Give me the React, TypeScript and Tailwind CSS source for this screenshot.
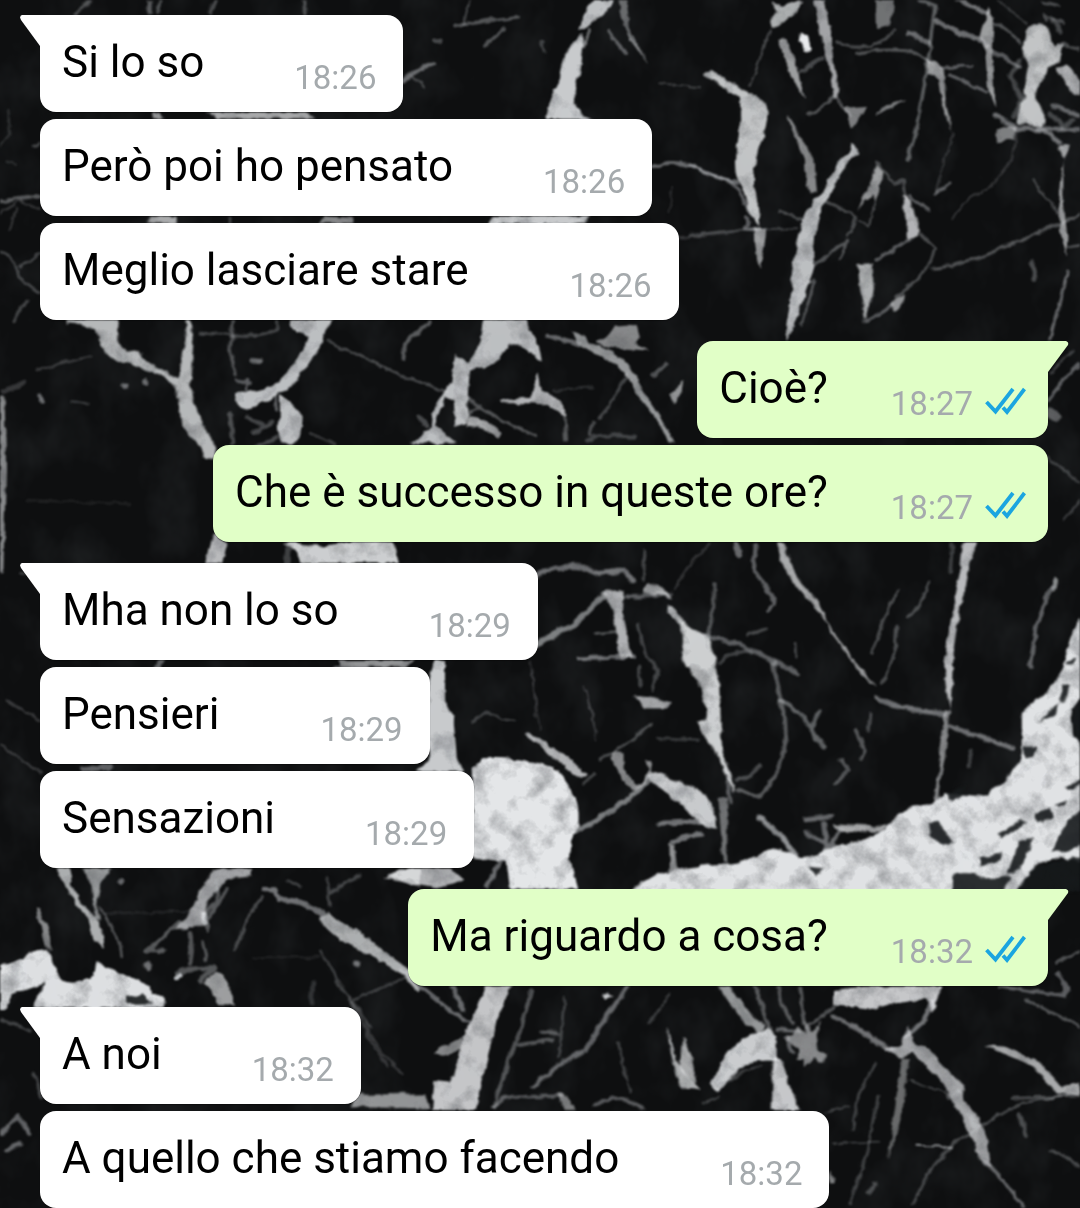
import React from "react";

type Message = { text: string; time: string; wide?: boolean };
type Group = { mine: boolean; messages: Message[] };

const conversation: Group[] = [
  {
    mine: false,
    messages: [
      { text: "Si lo so", time: "18:26" },
      { text: "Però poi ho pensato", time: "18:26" },
      { text: "Meglio lasciare stare", time: "18:26", wide: true },
    ],
  },
  {
    mine: true,
    messages: [
      { text: "Cioè?", time: "18:27" },
      { text: "Che è successo in queste ore?", time: "18:27" },
    ],
  },
  {
    mine: false,
    messages: [
      { text: "Mha non lo so", time: "18:29" },
      { text: "Pensieri", time: "18:29", wide: true },
      { text: "Sensazioni", time: "18:29" },
    ],
  },
  { mine: true, messages: [{ text: "Ma riguardo a cosa?", time: "18:32" }] },
  {
    mine: false,
    messages: [
      { text: "A noi", time: "18:32" },
      { text: "A quello che stiamo facendo", time: "18:32", wide: true },
    ],
  },
];

// A slab is one area of the marble with its own drawing scale.
// solids: [path, opacity]; lines: [path, width, opacity]
type Slab = {
  transform: string;
  solids: [string, number][];
  lines: [string, number, number][];
  holes?: string[];
};

const slabs: Slab[] = [
  {
    transform: "translate(400 0) scale(0.33333)",
    solids: [
      ["M580 0L640 0Q620 45 590 60Q560 80 535 90Q545 40 580 0Z", 0.8],
      ["M505 140L550 95Q552 150 540 220Q520 260 525 300Q530 335 580 358L436 358Q450 300 480 230Q495 160 505 140Z", 0.85],
      ["M545 140L568 85L575 85L552 150Z", 0.5],
      ["M280 645L575 645L555 672L265 672Z", 0.85],
      ["M655 0L680 0L690 90L735 180L690 120L665 50Z", 0.4],
    ],
    lines: [
      ["M165 80Q260 60 355 50", 11, 0.35],
      ["M190 75L210 -5", 6, 0.3],
      ["M255 135Q285 110 312 88", 12, 0.35],
      ["M10 245Q50 205 100 190", 12, 0.45],
      ["M35 230L75 262", 6, 0.3],
      ["M625 95Q660 140 675 160", 12, 0.4],
      ["M690 110L745 185", 8, 0.3],
      ["M420 125L438 150", 10, 0.25],
      ["M105 120L125 122", 12, 0.3],
      ["M745 508Q800 475 880 500Q960 540 1010 545", 12, 0.45],
      ["M780 250L900 262", 6, 0.25],
      ["M840 712L1000 695", 8, 0.22],
      ["M820 560L805 640", 4, 0.2],
    ],
  },
  {
    transform: "translate(690 0) scale(0.33333)",
    solids: [
      ["M45 225Q55 200 80 220L175 280Q235 300 235 330Q230 380 215 420Q190 480 192 560Q205 600 208 680L180 640Q165 580 140 530Q130 490 140 440Q155 370 150 295Q80 250 45 225Z", 0.82],
      ["M190 680L228 690Q225 750 208 800Q195 760 195 700Z", 0.65],
      ["M245 0L275 20L330 0L340 12Q310 50 265 75Q235 90 240 65L262 35Z", 0.72],
      ["M262 120Q290 110 305 150L325 220L345 300Q315 260 300 220Z", 0.65],
      ["M372 0L405 0Q415 70 425 120Q425 170 445 260Q445 300 430 290Q430 240 412 180L390 100Z", 0.68],
      ["M555 0L615 0L600 75L558 88Z", 0.45],
      ["M330 98L354 104L362 150L343 156L328 122Z", 1],
      ["M330 98L354 104L362 150L343 156L328 122Z", 1],
      ["M290 345Q310 360 335 420Q375 470 372 510L378 580L362 580Q345 530 345 480Z", 0.55],
      ["M460 322L535 318Q510 350 490 385Z", 0.5],
      ["M560 345Q570 315 650 300Q600 325 560 345Z", 0.5],
      ["M488 430L505 462Q460 495 440 540Q430 585 405 605Q385 640 380 680Q368 740 375 800Q350 860 330 920Q315 980 290 1020L288 980Q305 900 305 830Q320 720 340 660Q360 620 375 595Q410 575 420 530Q445 475 475 462Z", 0.8],
      ["M560 495L578 515Q570 570 555 605L548 580Q525 600 500 635Q545 550 560 495Z", 0.65],
      ["M640 585L662 600Q665 640 690 690Q670 720 650 710L650 660Q635 630 640 585Z", 0.75],
      ["M502 792L550 790Q545 820 552 860Q545 910 525 960Q520 920 512 880Z", 0.72],
      ["M595 915L645 878Q635 920 610 940Z", 0.6],
      ["M895 20L912 60L905 150L915 320L895 270L885 150L870 120Z", 0.65],
      ["M1010 90Q1050 50 1080 90L1090 140L1120 130L1110 180Q1070 200 1060 240Q1030 270 1040 310Q1080 350 1060 380L980 370Q985 320 1005 290Q1000 230 1015 190Q985 170 1010 90Z", 0.82],
      ["M1100 205Q1130 180 1150 210L1172 250L1172 285Q1130 270 1115 230Z", 0.75],
      ["M1110 440L1140 430Q1130 470 1120 475Q1100 460 1110 440Z", 0.7],
      ["M1120 475L1108 600L1110 690L1130 770L1132 710L1120 600Z", 0.65],
      ["M715 180L745 190L765 225L765 290L785 400L755 310L745 240L715 215Z", 0.65],
      ["M920 390L980 375L970 420L925 430Z", 0.5],
    ],
    lines: [
      ["M0 500Q70 530 120 540Q160 590 180 640", 9, 0.4],
      ["M165 650Q190 670 160 685L210 690", 10, 0.4],
      ["M240 90L180 260", 6, 0.3],
      ["M330 215L400 175", 12, 0.3],
      ["M440 125Q490 155 560 130Q600 110 615 90", 9, 0.3],
      ["M500 160Q570 145 650 152Q700 170 730 190", 9, 0.35],
      ["M655 98Q690 110 715 130", 14, 0.45],
      ["M690 0L735 20L725 90L710 220L685 350L655 480", 10, 0.42],
      ["M740 65L800 95Q860 110 890 135", 15, 0.5],
      ["M800 -5L890 40", 14, 0.5],
      ["M915 70Q960 90 990 130", 8, 0.35],
      ["M900 150L950 175L990 200", 12, 0.4],
      ["M750 205L850 195", 8, 0.4],
      ["M780 225L890 275", 10, 0.4],
      ["M920 0L1010 70", 6, 0.25],
      ["M440 290Q460 320 480 350M430 290Q400 325 350 345", 9, 0.35],
      ["M405 600L495 650Q490 690 470 710", 8, 0.3],
      ["M270 635L340 660", 9, 0.3],
      ["M0 705L130 690L320 685", 6, 0.25],
      ["M560 490L610 550L640 540L650 600", 9, 0.3],
      ["M555 600L540 680L505 660", 6, 0.3],
      ["M660 590L718 630", 10, 0.4],
      ["M690 700L735 745L715 800L670 850L620 890", 8, 0.35],
      ["M560 780L660 715M525 965L600 920", 10, 0.4],
      ["M730 805Q850 790 930 745Q1020 710 1100 675L1170 645", 9, 0.38],
      ["M735 585L780 550", 10, 0.4],
      ["M1030 540L1105 640", 6, 0.35],
      ["M1135 810Q1110 900 1080 1015", 9, 0.5],
      ["M1130 745L1170 735", 6, 0.4],
      ["M375 800Q410 760 470 725L450 780M350 850L375 840L335 970", 9, 0.35],
      ["M915 345L980 385L1060 390L1110 430", 14, 0.5],
      ["M1045 385L1170 388M1090 320L1170 345", 13, 0.45],
      ["M1060 10L1110 20M1120 130L1165 150M1070 60L1060 40L1120 70", 10, 0.3],
      ["M980 390L965 480L900 560L820 610L790 660", 6, 0.22],
      ["M1025 790L1035 835", 15, 0.3],
      ["M790 400L760 490L740 580", 5, 0.25],
      ["M990 180L960 230L1000 300L970 350M1110 100L1090 60M1080 340L1120 380L1150 360", 14, 0.28],
    ],
  },
  {
    transform: "translate(0 300) scale(0.33333)",
    solids: [
      ["M200 55L355 55L355 110Q350 150 390 155L415 150Q440 195 480 205L535 235Q545 180 558 110L560 50L570 50L580 130L570 250Q575 300 600 350Q625 410 650 440L640 480Q605 480 600 440L545 380Q540 320 528 260Q480 215 435 210Q395 185 350 185Q295 150 300 110Q270 70 200 70Z", 0.77],
      ["M870 60L1000 55L970 100Q970 140 935 175Q920 210 860 270Q800 305 745 330Q705 320 705 280Q780 275 820 255Q880 210 905 150L930 110Q870 90 870 60Z", 0.8],
      ["M840 285Q870 300 910 350Q915 390 880 435L845 430Q825 380 840 340Z", 0.8],
      ["M640 700L685 725L665 790L618 790Z", 0.78],
      ["M880 725Q960 750 1070 720L1180 725L1200 790L900 790Q900 750 850 730Z", 0.87],
      ["M0 290L14 290L18 500L10 820L0 820Z", 0.55],
    ],
    lines: [
      ["M45 65Q50 30 85 0", 10, 0.3],
      ["M600 100L690 103Q770 115 830 90L830 60", 8, 0.3],
      ["M700 60L690 150L705 220", 10, 0.35],
      ["M980 120L1200 225L1340 275", 8, 0.3],
      ["M110 210L270 170", 7, 0.27],
      ["M10 275L70 250", 16, 0.2],
      ["M80 600L390 612", 7, 0.1],
      ["M215 305L265 312", 8, 0.25],
      ["M690 340L700 430M760 400L820 365M770 440L830 410M740 350L800 380", 12, 0.3],
      ["M825 290L830 330M710 240L750 250M740 240L740 270", 10, 0.4],
      ["M755 182L778 184M372 255L380 258M437 244L440 248M120 285L124 300", 15, 0.5],
      ["M865 730L860 790", 16, 0.25],
      ["M930 400L1010 435", 8, 0.22],
    ],
  },
  {
    transform: "translate(380 300) scale(0.33333)",
    solids: [
      ["M310 55L440 55L445 90Q480 120 485 185Q465 170 445 150Q410 125 385 135Q350 190 320 200Q290 195 270 215L265 260L260 370L225 380L222 300L195 290L180 330L165 375L230 430L90 430Q140 400 155 375L165 320L215 240L225 165L265 190Q300 150 300 120Z", 0.8],
      ["M455 290L475 215L485 275Q550 290 560 350L545 345Q510 310 460 310L360 310L360 303Z", 0.75],
      ["M260 350Q310 345 365 400L350 415Q320 385 265 380Z", 0.7],
      ["M650 120Q700 100 700 80L770 75L780 110L770 130L805 155L700 145Q660 140 650 120Z", 0.55],
      ["M575 95L615 105L625 130Q680 140 730 180Q770 220 795 285Q840 350 860 385L885 432L865 430L845 380Q790 310 770 280Q740 220 700 190Q620 150 590 130Z", 0.62],
      ["M870 285L910 245L905 275L885 310Z", 0.6],
    ],
    lines: [
      ["M500 108Q550 120 600 135", 13, 0.45],
      ["M70 180L75 130L150 65", 12, 0.38],
      ["M820 230L860 190", 12, 0.35],
      ["M660 355Q700 310 710 270Q740 235 740 220", 9, 0.28],
      ["M620 420Q640 400 760 410", 12, 0.25],
      ["M265 300L300 320L260 340M300 320L370 365L470 410", 9, 0.35],
      ["M555 350L560 420", 9, 0.35],
      ["M520 270L640 262", 6, 0.18],
      ["M115 350L140 375M640 370L630 400", 12, 0.3],
    ],
  },
  {
    transform: "translate(520 530) scale(0.35714 0.33333)",
    solids: [
      ["M232 190Q260 170 290 185L288 250Q300 300 302 350L318 385L280 378Q275 290 255 230Z", 0.74],
      ["M345 175L360 160L390 168L430 205L400 200L345 190Z", 0.65],
      ["M415 220Q440 240 460 280Q500 300 520 320Q545 350 550 400Q560 470 562 560Q560 630 575 700Q605 770 600 790Q570 710 550 670Q520 630 497 575Q525 570 520 540Q515 480 490 440Q455 400 453 360Q465 310 440 275L412 250Z", 0.87],
      ["M315 495Q370 495 425 520L415 535L350 535Z", 0.68],
      ["M10 610Q50 610 90 650Q150 690 185 735L160 740Q100 690 60 650Z", 0.74],
      ["M365 725Q430 745 480 770Q530 790 535 830Q550 870 548 900Q520 885 490 870Q460 830 420 800Q380 770 360 745Z", 0.85],
      ["M255 665L290 670L290 720L325 765Q350 760 360 720L350 690L365 690L365 740Q330 780 315 780Q270 740 255 665Z", 0.55],
      ["M720 35L740 35Q750 100 790 160Q840 210 860 280Q900 340 950 410L1000 470L960 440Q900 350 870 310Q840 240 790 190Q730 120 720 35Z", 0.7],
      ["M1240 35L1280 35Q1260 90 1250 160Q1225 260 1215 350Q1210 450 1205 540Q1190 480 1188 400Q1200 310 1215 220Q1235 120 1240 35Z", 0.78],
      ["M1190 540L1205 540L1190 680L1175 760L1168 830L1158 830L1175 680Z", 0.55],
      ["M310 1085Q360 1030 440 1020Q520 1000 600 1000Q660 985 700 955Q740 955 790 985Q830 980 870 950Q950 940 1020 900Q1050 850 1100 830Q1170 825 1190 790L1310 800Q1330 770 1360 750Q1395 710 1405 670L1405 550Q1440 510 1480 480Q1520 430 1530 370Q1545 300 1575 250L1575 500L1540 540L1545 610L1575 650L1575 1000L1510 980L1450 1000L1390 1085Z", 0.96],
      ["M875 880L1030 890L1010 905L900 905Z", 0.7],
      ["M555 800L580 800L580 995L568 995Z", 0.45],
      ["M418 940L432 945L440 1020L420 1030Z", 0.6],
    ],
    lines: [
      ["M45 135Q110 100 180 112L220 130L290 122Q310 135 315 155", 15, 0.5],
      ["M45 345Q90 310 150 285Q190 250 235 195", 17, 0.55],
      ["M160 385L320 378", 11, 0.5],
      ["M300 200L420 195", 13, 0.4],
      ["M210 310L270 305", 8, 0.35],
      ["M430 180L480 100L530 40", 7, 0.2],
      ["M545 160L540 250L525 320", 12, 0.35],
      ["M520 320Q600 335 650 360L710 395L780 430", 14, 0.4],
      ["M560 400Q590 360 650 365", 10, 0.28],
      ["M710 400Q725 500 740 560Q750 640 725 710Q700 770 670 800L610 780", 13, 0.38],
      ["M730 510Q780 540 810 590L850 650M815 590L840 545", 12, 0.42],
      ["M660 45L655 120L715 215L695 245", 12, 0.4],
      ["M605 35L612 75", 14, 0.45],
      ["M610 750Q650 740 670 705", 12, 0.3],
      ["M150 905Q230 870 320 790L370 740", 15, 0.55],
      ["M225 690L300 640L370 580", 9, 0.35],
      ["M390 880L500 875M430 935Q470 915 510 912", 15, 0.5],
      ["M670 865Q710 895 740 930L770 975", 16, 0.65],
      ["M1000 505Q1080 540 1190 552", 15, 0.5],
      ["M1205 590L1300 625L1380 655", 14, 0.5],
      ["M1498 150L1495 170", 18, 0.6],
      ["M1490 175Q1450 240 1440 330L1430 410", 13, 0.4],
      ["M1210 40L1205 130M1265 660L1255 710", 10, 0.25],
      ["M1145 155L1120 225L1085 265M1060 180L1030 240L985 365M1055 290L1050 370L1015 460", 9, 0.3],
      ["M350 60L345 150M330 280L350 370L385 420L370 480M335 410L335 470", 9, 0.28],
      ["M575 700L590 820", 11, 0.4],
      ["M900 690L920 720L885 760M940 600L965 660L955 690", 11, 0.35],
      ["M770 340L772 385M980 550L975 600", 8, 0.3],
      ["M800 870L870 860M800 910L880 950M850 880L860 960M900 900L870 950", 14, 0.45],
      ["M180 760L210 730M640 315L690 295", 10, 0.3],
      ["M35 420L45 560M180 470L215 610", 6, 0.15],
      ["M385 625L500 632", 7, 0.25],
    ],
    holes: [
      "M1145 880L1170 875L1215 940L1190 945L1150 920Z",
      "M1400 930L1435 920L1430 960L1395 1020L1365 1035L1380 980Z",
      "M1285 985L1350 970L1345 990L1290 1010Z",
      "M1440 850L1480 835L1490 865L1450 880Z",
      "M1495 830L1530 810L1520 830Z",
      "M1535 870L1575 840L1575 940L1535 965L1490 960Z",
      "M1210 1035Q1260 1020 1300 1045L1375 1040L1350 1085L1210 1085Z",
      "M805 1010L850 1015L830 1040Z",
      "M1440 1010L1575 980L1575 1085L1390 1085Z",
      "M1475 550L1510 515L1500 555L1450 575Z",
      "M1515 460L1540 465L1535 500L1515 520Z",
      "M1525 400L1555 385L1550 405Z",
      "M1340 910L1400 870L1420 875L1350 925Z",
      "M1190 790L1250 770L1230 800L1205 815Z",
      "M1410 650L1445 650L1440 680L1415 685Z",
      "M1525 770L1575 750L1575 765L1535 780Z",
      "M1545 540L1575 510L1575 650L1550 610Z",
    ],
  },
  {
    transform: "translate(340 640) scale(0.33333)",
    solids: [
      ["M285 55L315 60L315 180L340 230L350 350L370 395L230 395L268 360L255 170Z", 0.85],
      ["M0 60L220 60L200 80L0 80Z", 0.6],
      ["M400 390L430 355Q560 350 640 385Q690 430 695 460Q720 480 715 560Q690 600 690 660L715 748L510 748L500 665L390 650Z", 0.98],
      ["M140 705L200 685L330 685L370 720L290 745L200 730Z", 0.74],
    ],
    lines: [
      ["M485 660L440 740", 13, 0.45],
      ["M400 245L440 215L490 235L525 240", 7, 0.25],
      ["M570 60L600 270M740 150L770 300", 5, 0.15],
    ],
  },
  {
    transform: "translate(0 850) scale(0.33333)",
    solids: [
      ["M165 50L210 50L215 100Q230 150 270 185L300 220L315 290L280 270L265 205Q220 160 200 110Z", 0.72],
      ["M245 55L335 55L300 110L290 170L300 210L285 205L278 110Z", 0.62],
      ["M0 345Q60 340 90 305L145 300L180 390Q220 410 280 380L290 335L360 370Q430 390 460 430L495 445L490 475L100 475L135 400L35 435L15 480L0 480Z", 0.95],
      ["M645 55L755 55L755 80L690 85L640 130Q610 170 610 220Q560 240 522 240Q590 170 600 120Z", 0.68],
      ["M610 395L650 365Q680 370 690 420L705 468L660 465Q640 420 610 395Z", 0.65],
      ["M955 200L985 185Q1010 220 1080 245Q1130 290 1220 350L1260 420L1250 425L1210 375Q1130 325 1060 290Q980 250 955 200Z", 0.72],
      ["M110 175L120 180L150 260L152 300L135 290Z", 0.55],
      ["M1150 85L1220 55L1260 55L1260 110L1200 95Z", 0.65],
    ],
    lines: [
      ["M790 118L825 120Q830 160 880 152Q920 160 965 190", 16, 0.5],
      ["M790 140L745 200Q740 240 700 300", 9, 0.3],
      ["M440 305L540 215M450 300L490 300", 14, 0.38],
      ["M300 170L360 280L365 320", 8, 0.35],
      ["M960 300L1030 420L1110 530M1060 450L1220 380", 7, 0.28],
      ["M570 250L575 300L570 340M530 370Q560 350 610 360L640 350M600 390L645 355", 14, 0.35],
      ["M650 90L650 150L615 190L620 240M680 120L620 210M610 280L620 330", 12, 0.35],
      ["M610 190L615 215M528 385L540 372", 12, 0.9],
      ["M1068 340L1075 342M360 93L364 95M440 345L442 350", 18, 0.5],
      ["M985 130L1080 75M980 80L985 170M860 90L900 110", 8, 0.3],
      ["M940 400L935 460", 18, 0.18],
      ["M320 190L600 182M760 325L960 320", 5, 0.15],
    ],
    holes: ["M380 440L430 432L460 460L385 462Z"],
  },
  {
    transform: "translate(340 970) scale(0.47192 0.33333)",
    solids: [
      ["M310 45L362 45Q350 100 330 150Q320 220 310 280Q298 350 290 420L195 420L200 330L235 335Q255 270 255 230Q270 170 285 130Z", 0.83],
      ["M30 375L180 370L190 415L20 412Z", 0.6],
      ["M200 250L210 230L260 205L255 235L215 260Z", 0.55],
      ["M800 48L825 48L870 130L900 165L890 190L850 150Z", 0.62],
      ["M905 175L925 200L925 270Q870 260 840 310L800 365L785 345Q800 280 840 220Q870 195 905 175Z", 0.86],
      ["M918 260L935 265L955 360L975 420L915 420Z", 0.84],
      ["M690 170L700 200L715 280Q745 330 765 360L722 355Q705 280 700 240Z", 0.72],
      ["M725 200L745 260L755 340L720 300Z", 0.7],
      ["M1045 60L1110 50L1275 48L1255 130L1245 85L1180 100L1130 120L1045 105Z", 0.84],
      ["M970 165L990 190L985 150L1000 190L1020 150L1008 200L1012 245L1030 250L1025 280L1005 262L985 295L985 265L965 270L975 240L940 200L960 195Z", 0.55],
      ["M1155 232L1190 230L1205 165L1215 220L1250 240L1290 310L1325 345L1320 390L1345 430L1370 500L1380 590L1355 570L1345 520L1300 400L1280 340L1210 240L1190 270Z", 0.68],
      ["M1365 225L1410 230L1485 280L1530 350L1568 335L1568 380L1520 370L1470 290Z", 0.7],
      ["M460 370L475 370L500 420L475 420Z", 0.5],
      ["M1190 270L1208 270L1190 440L1160 570L1175 420Z", 0.42],
      ["M555 75L565 65L578 75L562 90Z", 0.85],
      ["M1038 600L1050 640L1038 640Z", 0.6],
    ],
    lines: [
      ["M610 50L560 150L520 240Q450 290 410 350", 11, 0.45],
      ["M130 0L170 50L240 130L270 155M240 50L260 120", 11, 0.45],
      ["M405 60L385 170L360 260L325 410", 9, 0.35],
      ["M380 225L450 210M430 185L460 190", 12, 0.38],
      ["M325 410Q350 370 400 380L470 378M540 410Q560 380 600 385L640 415", 10, 0.4],
      ["M50 160L90 250L130 310M20 80L60 200L100 290", 6, 0.2],
      ["M590 220L600 290L615 370M700 70L655 165M475 80L465 260", 6, 0.25],
      ["M880 50L910 180M930 50L935 100L960 160M975 50L985 160M1050 110L990 170", 8, 0.38],
      ["M925 180L975 185M945 200L960 250", 9, 0.45],
      ["M1045 140Q1100 170 1130 210L1170 240", 12, 0.5],
      ["M1255 90L1240 150L1200 200", 10, 0.5],
      ["M1370 580L1410 640L1450 714", 9, 0.45],
      ["M1210 330L1290 375M1135 280L1100 370L1085 480M1140 380L1120 540L1080 700", 6, 0.28],
      ["M1215 700L1250 600L1300 520L1440 400L1568 370", 7, 0.3],
      ["M1220 527L1295 530", 6, 0.65],
      ["M1425 385L1568 378M1440 430L1455 500M1510 540L1568 590", 9, 0.3],
      ["M1045 520L1140 515M1030 425L1080 410", 5, 0.25],
      ["M1400 50L1535 80L1540 50L1520 10", 11, 0.4],
      ["M1315 360L1290 380M1330 430L1350 470M1135 640L1120 670", 12, 0.3],
      ["M800 360Q850 300 890 290M770 400L800 380", 6, 0.25],
    ],
  },
  {
    transform: "translate(0 0) scale(0.33333)",
    solids: [
      ["M440 0L455 0L455 42L440 42Z", 0.35],
      ["M455 335L480 335L495 355L460 355Z", 0.6],
      ["M620 335L920 335L945 355L650 355Z", 0.7],
      ["M455 646L530 646L530 670L440 670Z", 0.7],
      ["M975 646L1060 650L1060 670L955 670Z", 0.55],
    ],
    lines: [
      ["M225 45L275 -5M470 40L485 -5M630 40L650 -5M910 -5L915 40", 9, 0.35],
      ["M0 602L120 588", 9, 0.38],
      ["M0 640L60 600L120 630M30 690L50 620", 6, 0.22],
      ["M25 330L30 400L0 440M20 485L50 495", 7, 0.16],
      ["M0 755Q50 770 55 830L120 880M60 800L120 760", 8, 0.28],
      ["M100 440L120 430M685 650L690 670", 9, 0.3],
      ["M0 2235L120 2320M20 2100L120 2160M60 1720L120 1710", 7, 0.22],
      ["M0 3400L55 3350L85 3400M20 3450L60 3430", 14, 0.45],
      ["M100 3220L125 3290M0 3060L90 3090", 9, 0.3],
      ["M3145 1200L3200 1130L3240 1090", 12, 0.4],
      ["M3150 1240L3170 1250", 30, 0.38],
      ["M3150 1120L3220 1050M3145 1370L3240 1450M3190 1560L3240 1500", 8, 0.25],
      ["M3080 3000L3240 3080M3170 2890L3240 2850", 9, 0.35],
      ["M460 2020L490 1970M1000 2010L1100 2005M250 2310L330 2300", 16, 0.4],
    ],
  },
];

function Marble() {
  return (
    <svg
      aria-hidden="true"
      className="absolute inset-0 h-full w-full"
      viewBox="0 0 1080 1208"
      preserveAspectRatio="xMidYMin slice"
    >
      <defs>
        <filter id="veins" x="0" y="0" width="1080" height="1208" filterUnits="userSpaceOnUse" colorInterpolationFilters="sRGB">
          <feTurbulence type="fractalNoise" baseFrequency="0.09" numOctaves="3" seed="4" result="noise" />
          <feDisplacementMap in="SourceGraphic" in2="noise" scale="6" xChannelSelector="R" yChannelSelector="G" result="rough" />
          <feGaussianBlur in="rough" stdDeviation="1.2" result="soft" />
          <feTurbulence type="fractalNoise" baseFrequency="0.045" numOctaves="4" seed="21" />
          <feColorMatrix values="0 0 0 0 0.1  0 0 0 0 0.11  0 0 0 0 0.13  0.8 0 0 0 -0.36" />
          <feComposite in2="soft" operator="in" result="mottle" />
          <feMerge>
            <feMergeNode in="soft" />
            <feMergeNode in="mottle" />
          </feMerge>
        </filter>
        <filter id="grain" x="0" y="0" width="1080" height="1208" filterUnits="userSpaceOnUse" colorInterpolationFilters="sRGB">
          <feTurbulence type="fractalNoise" baseFrequency="0.02 0.015" numOctaves="4" seed="9" />
          <feColorMatrix values="0 0 0 0 0.28  0 0 0 0 0.3  0 0 0 0 0.31  1.4 0 0 0 -0.62" />
        </filter>
      </defs>
      <rect width="1080" height="1208" fill="#0e0f10" />
      <rect width="1080" height="1208" filter="url(#grain)" opacity="0.35" />
      <g filter="url(#veins)">
        {slabs.map((slab) => (
          <g key={slab.transform} transform={slab.transform}>
            {slab.lines.map(([d, width, opacity]) => (
              <path
                key={d}
                d={d}
                fill="none"
                stroke="#d5d8db"
                strokeWidth={width}
                strokeLinecap="round"
                strokeLinejoin="round"
                opacity={opacity}
              />
            ))}
            {slab.solids.map(([d, opacity], i) => (
              <path key={i} d={d} fill="#e9ebed" opacity={opacity} />
            ))}
            {slab.holes?.map((d) => (
              <path key={d} d={d} fill="#16191b" opacity={0.9} />
            ))}
          </g>
        ))}
      </g>
    </svg>
  );
}

function Tail({ mine }: { mine: boolean }) {
  return mine ? (
    <svg aria-hidden="true" className="absolute top-0 left-full -ml-px h-8 w-[22px]" viewBox="0 0 22 32">
      <path d="M0 0H19Q22 1 21 4L1 31H0Z" fill="#e1ffc7" />
    </svg>
  ) : (
    <svg aria-hidden="true" className="absolute top-0 right-full -mr-px h-8 w-[21px]" viewBox="0 0 21 32">
      <path d="M21 0H2Q-1 1 1 5L20 31H21Z" fill="#ffffff" />
    </svg>
  );
}

function ReadTicks() {
  return (
    <svg role="img" aria-label="Letto" className="mb-[9px] ml-3 h-7 w-[41px]" viewBox="0 0 41 28">
      <g fill="none" stroke="#1ba5e0" strokeWidth="3.8">
        <path d="M1.500 15L10.500 24.500L28 2" />
        <path d="M18 20.500L22 25L39.500 2" />
      </g>
    </svg>
  );
}

function Bubble({ message, mine, first }: { message: Message; mine: boolean; first: boolean }) {
  const color = mine ? "bg-[#e1ffc7] pr-[22px]" : "bg-white pr-[27px]";
  const corner = first ? (mine ? "rounded-tr-none" : "rounded-tl-none") : "";
  const gap = mine ? "mr-[63px]" : message.wide ? "mr-[101px]" : "mr-[90px]";
  return (
    <li
      className={`relative flex max-w-full items-end rounded-2xl pt-[21px] pb-3.5 pl-[22px] shadow-[0_1px_1px_rgba(0,0,0,0.35)] ${color} ${corner}`}
    >
      {first && <Tail mine={mine} />}
      <p className={`pb-2.5 text-[44px] leading-[52px] text-black ${gap}`}>{message.text}</p>
      <time className="text-[33px] leading-10 text-[#a5aaad]">{message.time}</time>
      {mine && <ReadTicks />}
    </li>
  );
}

export default function App() {
  return (
    <main className="relative min-h-screen overflow-hidden bg-[#0e0f10] pt-[15px] font-['Roboto',sans-serif]">
      <Marble />
      <div className="relative flex flex-col gap-[21px] pr-8 pl-10">
        {conversation.map((group, i) => (
          <ul key={i} className={`flex flex-col gap-[7px] ${group.mine ? "items-end" : "items-start"}`}>
            {group.messages.map((message, j) => (
              <Bubble key={message.text} message={message} mine={group.mine} first={j === 0} />
            ))}
          </ul>
        ))}
      </div>
    </main>
  );
}
